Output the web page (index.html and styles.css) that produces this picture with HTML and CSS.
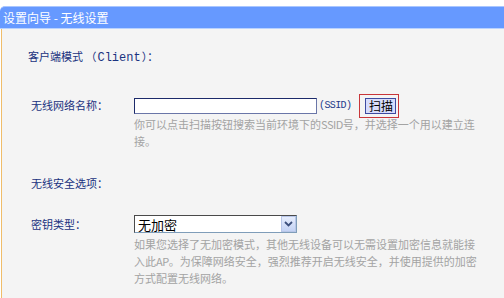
FILE: index.html
```html
<!DOCTYPE html>
<html lang="zh-CN">
<head>
    <meta charset="UTF-8">
    <title>设置向导 - 无线设置</title>
    <link rel="stylesheet" href="styles.css">
</head>
<body>
    <div class="wizard">
        <div class="wizard-title">设置向导 - 无线设置</div>
        <div class="wizard-body">
            <div class="mode">客户端模式 （<span class="mono">Client</span>）：</div>

            <div class="field field-ssid">
                <label class="field-label" for="ssid">无线网络名称：</label>
                <div class="field-ctrl">
                    <input type="text" id="ssid" class="text-input">
                    <span class="mono suffix">(SSID)</span>
                    <span class="scan-box"><button type="button" class="scan-btn">扫描</button></span>
                </div>
                <div class="help">你可以点击扫描按钮搜索当前环境下的<span class="narrow">SSID</span>号，并选择一个用以建立连<br>接。</div>
            </div>

            <div class="section">无线安全选项：</div>

            <div class="field field-key">
                <div class="field-label">密钥类型：</div>
                <div class="field-ctrl">
                    <div class="select">
                        <span class="select-text">无加密</span>
                        <span class="select-arrow">
                            <svg width="9" height="6" viewBox="0 0 9 6"><path d="M1 1 L4.5 4.5 L8 1" fill="none" stroke="#3c4f7c" stroke-width="1.8"/></svg>
                        </span>
                    </div>
                </div>
                <div class="help">如果您选择了无加密模式，其他无线设备可以无需设置加密信息就能接<br>入此<span class="narrow">AP</span>。为保障网络安全，强烈推荐开启无线安全，并使用提供的加密<br>方式配置无线网络。</div>
            </div>
        </div>
    </div>
</body>
</html>
```

FILE: styles.css
```css
body {
    margin: 0;
    background: #fff;
    font-family: "Noto Sans CJK SC", "DejaVu Sans", sans-serif;
    font-size: 11px;
}
.wizard {
    padding-top: 6px;
    height: 292px;
    display: flex;
    flex-direction: column;
}
.wizard-title {
    height: 21px;
    line-height: 21px;
    background: #6699ff;
    border-top: 1px solid #a9c6ff;
    border-bottom: 1px solid #b9d2ff;
    border-radius: 5px 0 0 0;
    color: #fff;
    font-size: 12px;
    padding-left: 3px;
}
.wizard-body {
    flex: 1;
    background: #f4f4f4;
    margin-left: 1px;
    border-left: 1px solid #f0bd6a;
    padding-top: 19px;
    color: #1a3280;
    line-height: 17px;
}
.mono {
    font-family: "Liberation Mono", monospace;
}
.mode {
    padding-left: 26px;
    font-size: 11px;
}
.mode .mono {
    font-size: 12px;
    margin: 0 1px;
}
.field {
    display: grid;
    grid-template-columns: 103px 360px;
    padding-left: 29px;
}
.field-ssid {
    margin-top: 27px;
}
.field-key {
    margin-top: 23px;
}
.field-label {
    display: flex;
    align-items: center;
}
.field-ctrl {
    display: flex;
    align-items: center;
}
.field-ssid .field-ctrl {
    height: 23px;
}
.text-input {
    width: 183px;
    height: 16px;
    box-sizing: border-box;
    border: 1px solid #6a76a8;
    border-top-color: #1c2a6a;
    border-left-color: #1c2a6a;
    background: #fff;
    margin: 0;
    padding: 0 2px;
}
.suffix {
    margin-left: 2px;
    font-size: 10px;
    letter-spacing: -0.6px;
    color: #23398a;
}
.scan-box {
    margin-left: 8px;
    border: 1px solid #c8363a;
    padding: 3px 2px 3px 5px;
    display: flex;
}
.scan-btn {
    width: 31px;
    height: 16px;
    padding: 0;
    margin: 0;
    border: 1px solid #3d4aa0;
    background: #d7dcfb;
    color: #000;
    font-family: "Noto Sans CJK SC", sans-serif;
    font-size: 12px;
    line-height: 14px;
    text-align: center;
}
.help {
    grid-column: 2;
    color: #a3a3a3;
    white-space: nowrap;
}
.narrow {
    letter-spacing: -0.5px;
}
.field-ssid .help {
    margin-top: -1px;
}
.field-key .help {
    margin-top: 3px;
}
.section {
    padding-left: 29px;
    margin-top: 25px;
}
.select {
    width: 163px;
    height: 18px;
    box-sizing: border-box;
    border: 1px solid #7f9db9;
    border-top-color: #4a4a4a;
    border-left-color: #4a4a4a;
    background: #fff;
    display: flex;
    align-items: center;
    justify-content: space-between;
    padding-left: 3px;
}
.select-text {
    color: #000;
    font-size: 13px;
}
.select-arrow {
    width: 15px;
    height: 16px;
    box-sizing: border-box;
    border: 1px solid #b8c6e8;
    background: linear-gradient(#e6edfd, #c3d2f4);
    display: flex;
    align-items: center;
    justify-content: center;
}
```
